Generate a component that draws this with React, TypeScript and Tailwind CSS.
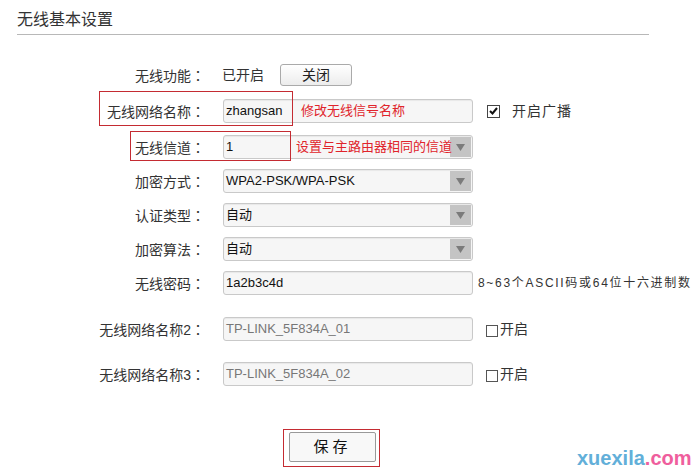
import React from "react";

const FONT = "font-['Liberation_Sans','Noto_Sans_CJK_SC',sans-serif]";

function Label({ text }: { text: string }) {
  return (
    <div className="w-[205px] shrink-0 text-right text-[14px] leading-[20px] text-[#333]">
      {text}
      <span className="font-['Noto_Sans_CJK_TC',sans-serif]">：</span>
    </div>
  );
}

function Field({ children, select, muted }: { children?: React.ReactNode; select?: boolean; muted?: boolean }) {
  return (
    <div
      className={`relative ml-[18px] flex h-[24px] w-[250px] shrink-0 items-center rounded-[3px] border border-[#c9c9c9] bg-[#f6f6f6] pl-[2px] text-[13px] shadow-[inset_0_1px_1px_rgba(0,0,0,0.06)] ${
        muted ? "text-[#777]" : "text-[#111]"
      }`}
    >
      {children}
      {select && (
        <div className="absolute right-[1px] top-[1px] flex h-[20px] w-[21px] items-center justify-center bg-[#c4c4c4]">
          <svg width="9" height="7" viewBox="0 0 9 7">
            <polygon points="0,0 9,0 4.5,7" fill="#7b7b7b" />
          </svg>
        </div>
      )}
    </div>
  );
}

function Checked() {
  return (
    <div className="flex h-[13px] w-[13px] items-center justify-center border border-[#444] bg-white">
      <svg width="9" height="8" viewBox="0 0 9 8">
        <path d="M1 4 L3.5 6.5 L8 1" stroke="#111" strokeWidth="2" fill="none" />
      </svg>
    </div>
  );
}

export default function App() {
  return (
    <div className={`relative h-[470px] w-[698px] overflow-hidden bg-white ${FONT}`}>
      <div className="mx-[17px] w-[632px] border-b border-[#b8b8b8] pb-[2px] pt-2 text-[16px] leading-[24px] text-[#333]">
        无线基本设置
      </div>

      <div className="flex flex-col">
        {/* wireless on/off */}
        <div className="mt-[29px] flex h-[22px] items-center">
          <Label text="无线功能" />
          <span className="ml-[17px] text-[14px] text-[#333]">已开启</span>
          <button className="ml-[16px] h-[22px] w-[72px] rounded-[3px] border border-[#aaa] bg-linear-to-b from-white to-[#ececec] text-[14px] leading-[20px] text-[#222]">
            关闭
          </button>
        </div>

        {/* ssid */}
        <div className="relative mt-[13px] flex h-[24px] items-center">
          <Label text="无线网络名称" />
          <Field>
            zhangsan
            <span className="absolute left-[77px] text-[13px] text-[#e0242b]">修改无线信号名称</span>
          </Field>
          <div className="ml-[14px]">
            <Checked />
          </div>
          <span className="ml-[12px] text-[14px] tracking-[1px] text-[#333]">开启广播</span>
          <div className="absolute left-[99px] top-[-8px] h-[35px] w-[194px] border border-[#c42b32]" />
        </div>

        {/* channel */}
        <div className="relative mt-[12px] flex h-[24px] items-center">
          <Label text="无线信道" />
          <Field select>
            1
            <span className="absolute left-[72px] z-10 text-[13px] text-[#e0242b]">设置与主路由器相同的信道</span>
          </Field>
          <div className="absolute left-[130px] top-[-4px] h-[30px] w-[161px] border border-[#c42b32]" />
        </div>

        <div className="mt-[10px] flex h-[24px] items-center">
          <Label text="加密方式" />
          <Field select>WPA2-PSK/WPA-PSK</Field>
        </div>

        <div className="mt-[10px] flex h-[24px] items-center">
          <Label text="认证类型" />
          <Field select>自动</Field>
        </div>

        <div className="mt-[10px] flex h-[24px] items-center">
          <Label text="加密算法" />
          <Field select>自动</Field>
        </div>

        <div className="mt-[10px] flex h-[24px] items-center">
          <Label text="无线密码" />
          <Field>1a2b3c4d</Field>
          <span className="ml-[5px] whitespace-nowrap text-[12px] tracking-[1.7px] text-[#333]">
            8~63个ASCII码或64位十六进制数
          </span>
        </div>

        <div className="mt-[22px] flex h-[24px] items-center">
          <Label text="无线网络名称2" />
          <Field muted>TP-LINK_5F834A_01</Field>
          <div className="ml-[13px] mt-[3px] h-[12px] w-[12px] border border-[#555]" />
          <span className="ml-[2px] text-[14px] text-[#333]">开启</span>
        </div>

        <div className="mt-[21px] flex h-[24px] items-center">
          <Label text="无线网络名称3" />
          <Field muted>TP-LINK_5F834A_02</Field>
          <div className="ml-[13px] mt-[3px] h-[12px] w-[12px] border border-[#555]" />
          <span className="ml-[2px] text-[14px] text-[#333]">开启</span>
        </div>

        <div className="relative ml-[289px] mt-[46px] w-[87px]">
          <button className="h-[30px] w-[87px] rounded-[2px] border border-[#999] bg-[#f8f8f8] text-[15px] tracking-[4px] text-[#111]">
            保存
          </button>
          <div className="absolute left-[-6px] top-[-3px] h-[38px] w-[97px] border border-[#c42b32]" />
        </div>
      </div>

      <div className="absolute left-[577px] top-[446px] text-[20px] font-bold leading-[24px]">
        <span className="text-[#62afd9]">xuexila</span>
        <span className="text-[#ef5e9d]">.com</span>
      </div>
    </div>
  );
}
